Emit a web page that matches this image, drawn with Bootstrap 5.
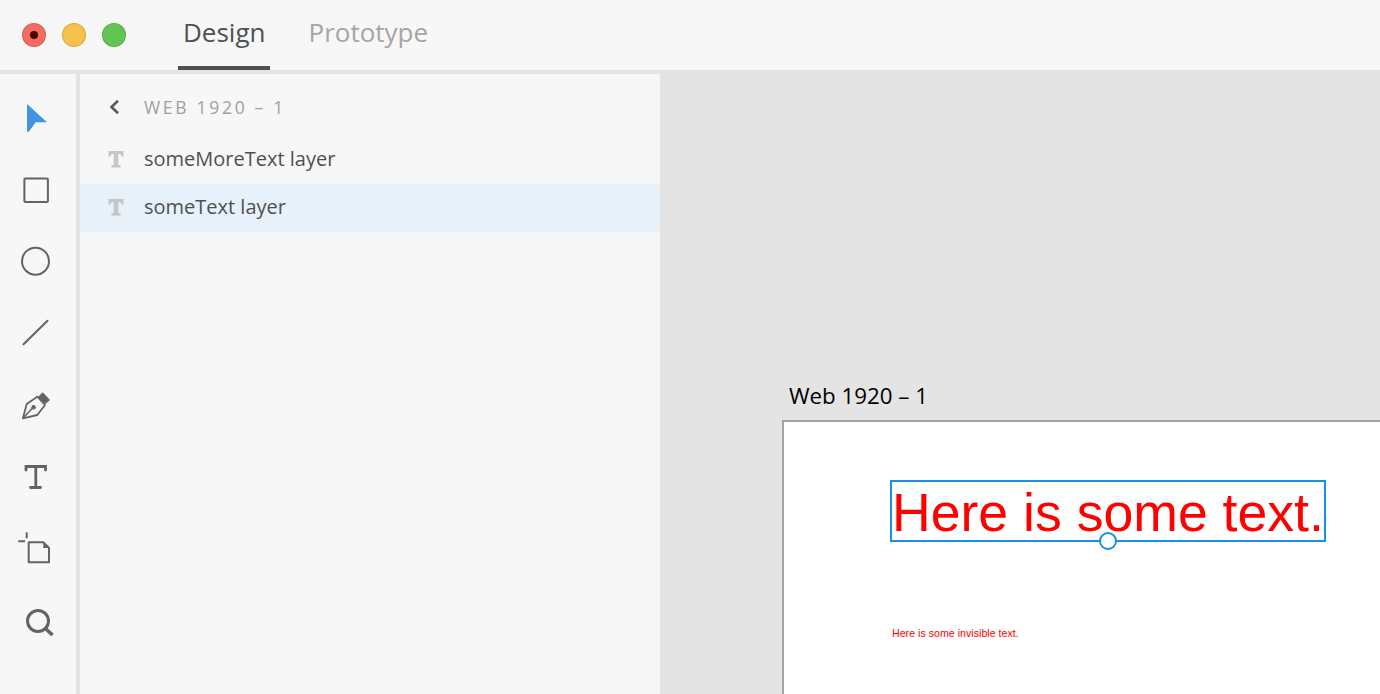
<!DOCTYPE html>
<html lang="en"><head><meta charset="utf-8"><title>Design</title>
<link href="https://cdn.jsdelivr.net/npm/bootstrap@5.3.0/dist/css/bootstrap.min.css" rel="stylesheet">
<style>
html,body{height:100%;overflow:hidden}
body{font-family:"Open Sans","Liberation Sans",sans-serif;background:#f7f7f7;color:#505050}
.app-shell{height:694px;width:1380px}
.title-bar{height:74px;border-bottom:4px solid #e3e3e3;background:#f7f7f7;padding-left:22px}
.light-dot{width:24px;height:24px;border-radius:50%;border:1px solid rgba(0,0,0,.12)}
.light-r{background:#f26d60}.light-y{background:#f7c14d}.light-g{background:#61c554}
.light-core{width:8px;height:8px;border-radius:50%;background:#4a0500}
.mode-tabs{margin-left:52px;gap:33px;height:70px}
.mode-tab{font-size:26px;padding:0 5px;height:70px;line-height:64px;color:#a8a5a2;border-bottom:4px solid transparent}
.mode-tab.on{color:#505050;border-bottom-color:#505050}
.main-area{height:620px}
.tool-rail{width:80px;border-right:4px solid #e3e3e3;flex:none;background:#f7f7f7}
.tool-rail svg{display:block;position:absolute}
.tool-slot{height:72px;width:76px;position:relative}
.layer-panel{width:580px;flex:none;background:#f7f7f7}
.crumb{height:62px;padding:4px 0 0 28px;color:#a0a0a0;font-size:17.5px;font-weight:500;letter-spacing:2.7px}
.crumb-label{margin-left:24px}
.layer-row{height:48px;padding:0 0 2px 28px;font-size:20px;color:#505050}
.layer-row.sel{background:#e7f1fa}
.layer-name{margin-left:20px}
.board-area{background:#e4e4e4;padding:306px 0 0 122px;overflow:hidden}
.board-name{font-size:22.3px;color:#000;height:40px;line-height:31px;margin-left:7px}
.board{background:#fff;border:2px solid #a3a3a3;border-right:0;border-bottom:0;height:300px;position:relative}
.pick-box{position:absolute;left:106px;top:58px;width:436px;height:62px;border:2px solid #1b8fe3}
.big-copy{position:absolute;left:108px;top:59px;font-family:"Liberation Sans",Arial,sans-serif;font-size:53.6px;line-height:62px;color:#f00;white-space:nowrap}
.pick-handle{position:absolute;left:315px;top:110px;width:18px;height:18px;border-radius:50%;background:#fff;border:2px solid #1b8fe3}
.tiny-copy{position:absolute;left:108px;top:204px;font-family:"Liberation Sans",Arial,sans-serif;font-size:10.67px;line-height:14px;color:#f00;white-space:nowrap}
</style></head><body>
<div class="app-shell d-flex flex-column">
  <div class="title-bar d-flex align-items-center flex-shrink-0">
    <div class="d-flex gap-3">
      <span class="light-dot light-r d-flex align-items-center justify-content-center"><span class="light-core"></span></span>
      <span class="light-dot light-y"></span>
      <span class="light-dot light-g"></span>
    </div>
    <div class="mode-tabs d-flex">
      <div class="mode-tab on">Design</div>
      <div class="mode-tab">Prototype</div>
    </div>
  </div>
  <div class="main-area d-flex">
    <div class="tool-rail">
      <div class="tool-slot"><svg style="left:22px;top:26px" width="28" height="34" viewBox="0 0 28 34"><path d="M5 4L25 22.3H13.7L6.7 31.7H5Z" fill="#4293e2"/></svg></div>
      <div class="tool-slot"><svg style="left:20px;top:26px" width="32" height="32" viewBox="0 0 32 32"><rect x="4.4" y="6.4" width="23.5" height="23.5" rx="1" fill="none" stroke="#636363" stroke-width="2"/></svg></div>
      <div class="tool-slot"><svg style="left:20px;top:26px" width="32" height="34" viewBox="0 0 32 34"><circle cx="15.5" cy="17.2" r="13.5" fill="none" stroke="#636363" stroke-width="2"/></svg></div>
      <div class="tool-slot"><svg style="left:20px;top:26px" width="32" height="32" viewBox="0 0 32 32"><path d="M3.5 28.3L27.5 4.7" stroke="#636363" stroke-width="2" stroke-linecap="round"/></svg></div>
      <div class="tool-slot"><svg style="left:20px;top:26px" width="32" height="36" viewBox="0 0 32 36"><path d="M2.9 30.3L6.7 16L17.3 8.7L25 17L17.3 27Z" fill="none" stroke="#636363" stroke-width="1.8" stroke-linejoin="round"/><path d="M17.7 9.3L22.7 4.3L30 12L25.3 16Z" fill="#636363"/><path d="M2.9 30.3L13.3 19.3" stroke="#636363" stroke-width="1.6"/><circle cx="13.6" cy="19.3" r="2.2" fill="#636363"/></svg></div>
      <div class="tool-slot"><svg style="left:20px;top:26px" width="32" height="32" viewBox="0 0 32 32"><path d="M6 10V6.5H25.5V10M15.8 6.5V27M10.5 27.5H20.5" fill="none" stroke="#636363" stroke-width="2.8" stroke-linecap="round"/></svg></div>
      <div class="tool-slot"><svg style="left:16px;top:21px" width="38" height="42" viewBox="0 0 38 42"><path d="M2.3 14.3H9M10.7 5.3V11.3" stroke="#636363" stroke-width="2"/><path d="M12.7 15.3H27.3L33 21V35.3H12.7Z" fill="none" stroke="#636363" stroke-width="2" stroke-linejoin="round"/><path d="M27.3 15.3L33 21H27.3Z" fill="#636363"/></svg></div>
      <div class="tool-slot"><svg style="left:24px;top:20px" width="34" height="42" viewBox="0 0 34 42"><circle cx="14" cy="23" r="10.5" fill="none" stroke="#636363" stroke-width="3"/><path d="M22 31L28.5 37" stroke="#636363" stroke-width="3.6"/></svg></div>
    </div>
    <div class="layer-panel">
      <div class="crumb d-flex align-items-center">
        <svg width="12" height="16" viewBox="0 0 12 16"><path d="M10 1.7L3.5 8L10 14.3" fill="none" stroke="#5a5a5a" stroke-width="2.6"/></svg>
        <span class="crumb-label">WEB 1920 – 1</span>
      </div>
      <div class="layer-row d-flex align-items-center">
        <svg width="16" height="18" viewBox="0 0 16 18"><path d="M0.5 6.5V1H15.5V6.5H13.5L12.5 4H3.5L2.5 6.5ZM5.7 3H10.3V15H12.5V17.5H3.5V15H5.7Z" fill="#c6c6c6"/></svg>
        <span class="layer-name">someMoreText layer</span>
      </div>
      <div class="layer-row sel d-flex align-items-center">
        <svg width="16" height="18" viewBox="0 0 16 18"><path d="M0.5 6.5V1H15.5V6.5H13.5L12.5 4H3.5L2.5 6.5ZM5.7 3H10.3V15H12.5V17.5H3.5V15H5.7Z" fill="#c6c6c6"/></svg>
        <span class="layer-name">someText layer</span>
      </div>
    </div>
    <div class="board-area flex-grow-1">
      <div class="board-name">Web 1920 – 1</div>
      <div class="board">
        <div class="pick-box"></div>
        <div class="big-copy">Here is some text.</div>
        <div class="pick-handle"></div>
        <div class="tiny-copy">Here is some invisible text.</div>
      </div>
    </div>
  </div>
</div>
</body></html>
